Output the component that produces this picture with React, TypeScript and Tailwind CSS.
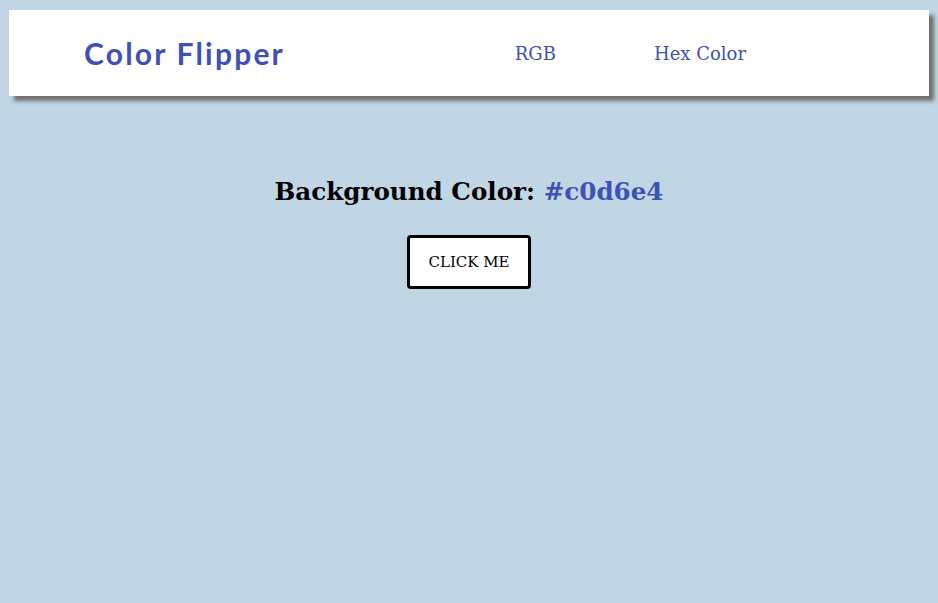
export default function App() {
  return (
    <div className="min-h-screen w-full bg-[#c0d6e4] pt-[10px]">
      <nav className="mx-auto flex h-[86px] w-[920px] items-center bg-white shadow-[5px_5px_4px_#6f6f6f]">
        <div
          className="ml-[75px] text-[30px] font-bold tracking-[2.2px] text-[#3f51b5]"
          style={{ fontFamily: 'Lato, "Open Sans", sans-serif' }}
        >
          Color Flipper
        </div>
        <ul
          className="ml-auto mr-[183px] flex items-center gap-[98px] text-[18px] text-[#3f51b5]"
          style={{ fontFamily: '"DejaVu Serif", serif' }}
        >
          <li>RGB</li>
          <li>Hex Color</li>
        </ul>
      </nav>
      <main className="flex flex-col items-center pt-[78px]">
        <h2
          className="text-[24.6px] font-bold text-black leading-[36px]"
          style={{ fontFamily: '"DejaVu Serif", serif' }}
        >
          Background Color: <span className="text-[#3f51b5]">#c0d6e4</span>
        </h2>
        <button
          className="mt-[25px] flex h-[54px] w-[124px] items-center justify-center rounded-[4px] border-[3px] border-black bg-white text-[15px] text-black"
          style={{ fontFamily: '"DejaVu Serif", serif' }}
        >
          CLICK ME
        </button>
      </main>
    </div>
  );
}
